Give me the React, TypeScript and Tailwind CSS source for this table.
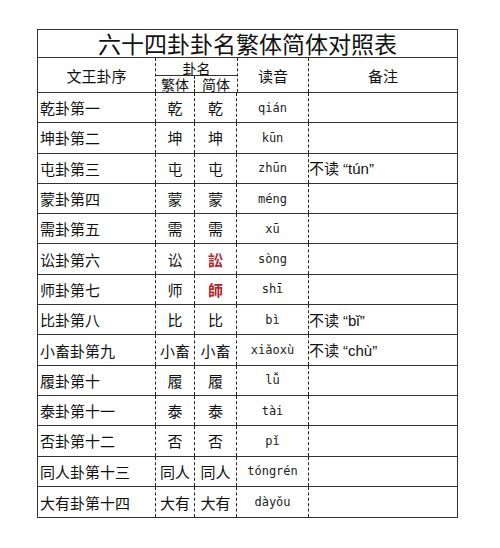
import React from 'react';

interface Row {
    order: string;
    fan: string;
    jian: string;
    red?: boolean;
    pinyin: string;
    note?: string;
}

const rows: Row[] = [
    { order: '乾卦第一', fan: '乾', jian: '乾', pinyin: 'qián' },
    { order: '坤卦第二', fan: '坤', jian: '坤', pinyin: 'kūn' },
    { order: '屯卦第三', fan: '屯', jian: '屯', pinyin: 'zhūn', note: 'tún' },
    { order: '蒙卦第四', fan: '蒙', jian: '蒙', pinyin: 'méng' },
    { order: '需卦第五', fan: '需', jian: '需', pinyin: 'xū' },
    { order: '讼卦第六', fan: '讼', jian: '訟', red: true, pinyin: 'sòng' },
    { order: '师卦第七', fan: '师', jian: '師', red: true, pinyin: 'shī' },
    { order: '比卦第八', fan: '比', jian: '比', pinyin: 'bì', note: 'bǐ' },
    { order: '小畜卦第九', fan: '小畜', jian: '小畜', pinyin: 'xiǎoxù', note: 'chù' },
    { order: '履卦第十', fan: '履', jian: '履', pinyin: 'lǚ' },
    { order: '泰卦第十一', fan: '泰', jian: '泰', pinyin: 'tài' },
    { order: '否卦第十二', fan: '否', jian: '否', pinyin: 'pǐ' },
    { order: '同人卦第十三', fan: '同人', jian: '同人', pinyin: 'tóngrén' },
    { order: '大有卦第十四', fan: '大有', jian: '大有', pinyin: 'dàyǒu' },
];

const cjk = "font-['Noto_Sans_CJK_SC',sans-serif]";

export default function App() {
    return (
        <div className={`w-[500px] h-[548px] bg-white pt-[29px] pl-[37px] text-[#111] ${cjk}`}>
            <div className="w-[421px] border border-[#333]">
                {/* 标题 */}
                <div className="h-[28px] border-b border-[#333] flex items-center justify-center text-[23px] leading-none font-normal">
                    六十四卦卦名繁体简体对照表
                </div>

                {/* 表头 */}
                <div className="h-[35px] flex border-b border-[#333]">
                    <div className="w-[118px] border-r border-dashed border-[#222] flex items-center justify-center text-[15px] leading-none">
                        文王卦序
                    </div>
                    <div className="w-[81px] flex flex-col">
                        <div className="h-[18px] border-b border-[#333] flex items-center justify-center text-[14px] leading-[14px] pt-[2px]">
                            卦名
                        </div>
                        <div className="flex-1 flex">
                            <div className="w-[39px] border-r border-dashed border-[#222] flex items-center justify-center text-[14px] leading-none">
                                繁体
                            </div>
                            <div className="w-[42px] flex items-center justify-center text-[14px] leading-none">
                                简体
                            </div>
                        </div>
                    </div>
                    <div className="w-[72px] border-x border-dashed border-[#222] flex items-center justify-center text-[15px] leading-none">
                        读音
                    </div>
                    <div className="flex-1 flex items-center justify-center text-[15px] leading-none">
                        备注
                    </div>
                </div>

                {/* 数据行 */}
                {rows.map((r, i) => (
                    <div
                        key={r.order}
                        className={`h-[30.3px] flex ${i < rows.length - 1 ? 'border-b border-[#333]' : ''}`}
                    >
                        <div className="w-[118px] border-r border-dashed border-[#222] flex items-center pl-[2px] text-[15px] leading-none">
                            {r.order}
                        </div>
                        <div className="w-[39px] border-r border-dashed border-[#222] flex items-center justify-center text-[15px] leading-none">
                            {r.fan}
                        </div>
                        <div
                            className={`w-[42px] border-r border-dashed border-[#222] flex items-center justify-center text-[15px] leading-none ${
                                r.red ? 'text-[#b4262a] font-bold' : ''
                            }`}
                        >
                            {r.jian}
                        </div>
                        <div className="w-[72px] border-r border-dashed border-[#222] flex items-center justify-center font-['DejaVu_Sans_Mono',monospace] text-[12px] leading-none text-[#222]">
                            {r.pinyin}
                        </div>
                        <div className="flex-1 flex items-center text-[15px] leading-none">
                            {r.note && (
                                <span>
                                    不读
                                    <span className="font-['Liberation_Sans',sans-serif] ml-[4px]">“{r.note}”</span>
                                </span>
                            )}
                        </div>
                    </div>
                ))}
            </div>
        </div>
    );
}
